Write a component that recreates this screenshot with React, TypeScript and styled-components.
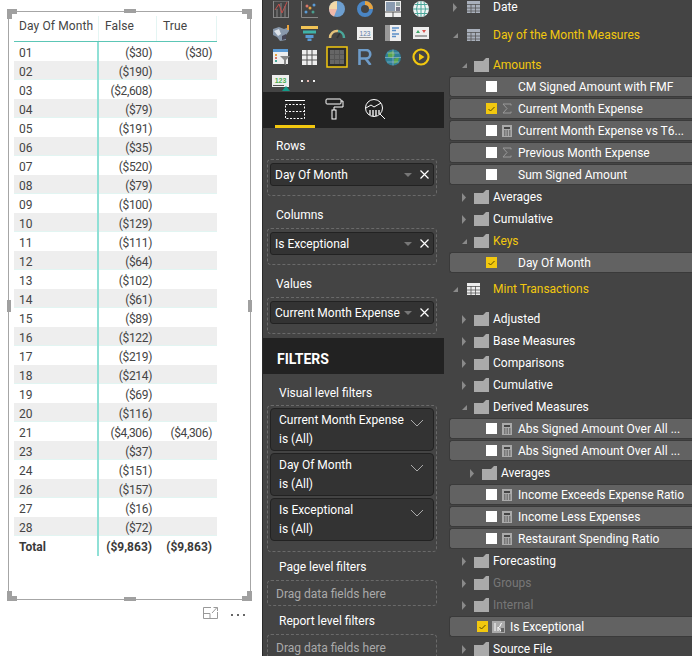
import React from "react";
import styled, { createGlobalStyle } from "styled-components";

const Global = createGlobalStyle`
  html, body { margin: 0; padding: 0; background: #fff; }
  body { width: 692px; height: 656px; overflow: hidden; font-family: Roboto, "Open Sans", Arial, sans-serif; font-size: 12px; }
  * { box-sizing: border-box; }
`;

const Page = styled.div`
  display: grid;
  grid-template-columns: 262px 182px 248px;
  width: 692px;
  height: 656px;
  overflow: hidden;
`;

/* ---------- report canvas ---------- */
const Canvas = styled.section`
  padding: 11px 11px 0 8px;
  background: #fff;
`;
const Frame = styled.div`
  position: relative;
  width: 243px;
  height: 589px;
  border: 1px solid #a6a6a6;
  padding: 4px 0 0 5px;
`;
const Corner = styled.span<{ $v: "top" | "bottom"; $h: "left" | "right" }>`
  position: absolute;
  width: 10px;
  height: 10px;
  ${(p) => p.$v}: ${(p) => (p.$v === "top" ? "-3px" : "-2px")};
  ${(p) => p.$h}: -2px;
  border-${(p) => p.$v}: 5px solid #a0a0a0;
  border-${(p) => p.$h}: 5px solid #a0a0a0;
`;
const HandleH = styled.span<{ $v: "top" | "bottom" }>`
  position: absolute;
  left: 115px;
  width: 12px;
  height: 4px;
  ${(p) => p.$v}: ${(p) => (p.$v === "top" ? "-3px" : "-2px")};
  background: #a0a0a0;
`;
const HandleV = styled.span<{ $h: "left" | "right" }>`
  position: absolute;
  top: 288px;
  width: 4px;
  height: 12px;
  ${(p) => p.$h}: -2px;
  background: #a0a0a0;
`;
const Matrix = styled.div`
  width: 203px;
  color: #444;
`;
const MatrixRow = styled.div<{ $band?: boolean }>`
  display: grid;
  grid-template-columns: 85px 58px 60px;
  height: 19px;
  line-height: 18px;
  background: ${(p) => (p.$band ? "#eeeeee" : "#fff")};
  box-shadow: inset 0 -1px 0 ${(p) => (p.$band ? "#e2f5f2" : "#fff")};
`;
const MatrixHead = styled.div`
  display: grid;
  grid-template-columns: 85px 58px 60px;
  height: 26px;
  line-height: 21px;
  border-bottom: 1px solid #5cc6b6;
  box-shadow: 0 1px 0 #5cc6b6;
`;
const HeadCell = styled.div`
  padding-left: 6px;
  border-right: 1px solid #e4f5f3;
  white-space: nowrap;
  letter-spacing: 0.12px;
  &:first-child { padding-left: 5px; }
`;
const KeyCell = styled.div`
  padding: 2px 0 0 5px;
  border-right: 2px solid #90e0d6;
`;
const NumCell = styled.div<{ $total?: boolean }>`
  padding: 2px 5px 0 0;
  text-align: right;
  letter-spacing: ${(p) => (p.$total ? "0" : "-0.35px")};
`;
const TotalRow = styled(MatrixRow)`
  font-weight: 700;
  background: #fff;
  box-shadow: none;
  color: #3a3a3a;
`;
const VisualActions = styled.div`
  display: flex;
  justify-content: flex-end;
  align-items: flex-start;
  gap: 13px;
  width: 237px;
  margin-top: 7px;
`;
const DotsWrap = styled.span`
  display: block;
  padding-top: 5px;
  line-height: 0;
`;

/* ---------- visualizations pane ---------- */
const Viz = styled.section`
  background: #444444;
  border-left: 1px solid #2a2a2a;
  color: #fff;
  overflow: hidden;
  height: 656px;
`;
const Gallery = styled.div`
  height: 95px;
`;
const IconGrid = styled.div`
  display: grid;
  grid-template-columns: repeat(6, 28px);
  grid-auto-rows: 24px;
  margin: -3px 0 0 4px;
`;
const IconCell = styled.div`
  display: flex;
  align-items: center;
  justify-content: center;
`;
const Tabs = styled.div`
  display: flex;
  height: 36px;
  padding-left: 12px;
  background: #222222;
`;
const Tab = styled.div<{ $active?: boolean }>`
  display: flex;
  align-items: center;
  justify-content: center;
  width: 40px;
  height: 36px;
  border-bottom: 3px solid ${(p) => (p.$active ? "#f2c80f" : "transparent")};
`;
const Sections = styled.div<{ $first?: boolean }>`
  padding: ${(p) => (p.$first ? "9px" : "0")} 6px 0 4px;
`;
const Label = styled.div<{ $indent?: boolean; $top?: number; $nudge?: boolean }>`
  height: 18px;
  line-height: ${(p) => (p.$nudge ? "20px" : "18px")};
  margin-top: ${(p) => p.$top ?? 10}px;
  margin-bottom: 4px;
  padding-left: ${(p) => (p.$indent ? "12px" : "9px")};
  white-space: nowrap;
`;
const Well = styled.div<{ $tight?: boolean }>`
  display: flex;
  flex-direction: column;
  gap: 2px;
  width: 170px;
  padding: ${(p) => (p.$tight ? "2px 2px 10px" : "3px 2px 9px")};
  border: 1px dashed #6a6a6a;
  border-radius: 4px;
`;
const Pill = styled.div`
  display: flex;
  align-items: center;
  height: 23px;
  padding: 0 4px;
  background: #333333;
  border: 1px solid #222;
  border-radius: 3px;
  white-space: nowrap;
`;
const PillText = styled.span`
  flex: 1;
`;
const Caret = styled.span`
  width: 0;
  height: 0;
  margin-right: 8px;
  border-left: 4px solid transparent;
  border-right: 4px solid transparent;
  border-top: 4px solid #777;
`;
const FilterPill = styled.div`
  display: grid;
  grid-template-columns: 1fr 23px;
  height: 43px;
  padding: 2px 0 0 8px;
  background: #333333;
  border: 1px solid #222;
  border-radius: 4px;
  line-height: 19px;
  white-space: nowrap;
`;
const Chevron = styled.div`
  padding-top: 3px;
`;
const FiltersBar = styled.div`
  display: flex;
  align-items: center;
  height: 36px;
  margin: 4px 0 9px;
  padding: 5px 0 0 14px;
  background: #222222;
  font-size: 14px;
  font-weight: 700;
`;
const DropZone = styled.div`
  width: 170px;
  height: 26px;
  margin-bottom: 6px;
  padding-left: 8px;
  line-height: 26px;
  color: #aaaaaa;
  border: 1px dashed #6a6a6a;
  border-radius: 4px;
`;

/* ---------- fields pane ---------- */
const Fields = styled.section`
  background: #444444;
  color: #fff;
  overflow: hidden;
  height: 656px;
`;
const Tree = styled.div`
  margin-top: -7px;
`;
const TableRow = styled.div<{ $top?: number; $bottom?: number }>`
  display: flex;
  align-items: center;
  height: 28px;
  margin-top: ${(p) => p.$top ?? 0}px;
  margin-bottom: ${(p) => p.$bottom ?? 0}px;
  padding-left: 8px;
`;
const FolderRow = styled.div<{ $nested?: boolean }>`
  display: flex;
  align-items: center;
  height: 22px;
  padding-left: ${(p) => (p.$nested ? "25px" : "17px")};
`;
const ArrowSlot = styled.span<{ $table?: boolean }>`
  display: flex;
  width: ${(p) => (p.$table ? "15px" : "13px")};
  justify-content: flex-start;
`;
const TreeLabel = styled.span<{ $tone?: "on" | "dim" }>`
  white-space: nowrap;
  color: ${(p) => (p.$tone === "on" ? "#f2c80f" : p.$tone === "dim" ? "#777" : "#fff")};
`;
const FolderName = styled(TreeLabel)`
  margin-left: 4px;
`;
const TableName = styled(TreeLabel)`
  margin-left: 13px;
`;
const FieldRow = styled.div<{ $wide?: boolean }>`
  display: flex;
  align-items: center;
  height: 21px;
  margin: 0 0 1px 5px;
  padding-left: ${(p) => (p.$wide ? "27px" : "36px")};
  background: #626262;
  border: 1px solid #3a3a3a;
  border-right: 0;
  border-radius: 3px 0 0 3px;
  white-space: nowrap;
`;
const Check = styled.span<{ $on?: boolean }>`
  display: flex;
  align-items: center;
  justify-content: center;
  flex: none;
  width: 11px;
  height: 11px;
  background: ${(p) => (p.$on ? "#f2c80f" : "#fff")};
`;
const FieldIconSlot = styled.span<{ $wide?: boolean }>`
  display: flex;
  align-items: center;
  justify-content: center;
  flex: none;
  width: ${(p) => (p.$wide ? "13px" : "10px")};
  margin: ${(p) => (p.$wide ? "0 5px 0 4px" : "0 6px 0 5px")};
`;

/* ---------- drawings ---------- */
const Folder = () => (
  <svg width="15" height="14" viewBox="0 0 15 14"><path d="M0 3h9l3-3h3v14H0z" fill="#aaa" /></svg>
);
const Arrow = ({ open }: { open?: boolean }) =>
  open ? (
    <svg width="7" height="7" viewBox="0 0 7 7"><path d="M6 1v5H1z" fill="#8a8a8a" /></svg>
  ) : (
    <svg width="6" height="9" viewBox="0 0 6 9"><path d="M1 0l4 4.500-4 4.500z" fill="#8a8a8a" /></svg>
  );
const TableIcon = ({ white }: { white?: boolean }) => (
  <svg width="13" height="12" viewBox="0 0 13 12">
    <rect width="13" height="12" fill={white ? "#eee" : "#a9b0bb"} />
    <path d="M0 3.500h13M0 7h13M0 10h13M4 3v9M8.500 3v9" stroke="#555" strokeWidth=".8" />
  </svg>
);
const Sigma = () => (
  <svg width="10" height="11" viewBox="0 0 10 11"><path d="M9 2.500V1H1l4 4.500L1 10h8V8.500" fill="none" stroke="#999" /></svg>
);
const Calc = () => (
  <svg width="10" height="12" viewBox="0 0 10 12">
    <rect width="10" height="12" fill="#aaa" />
    <rect x="2" y="2" width="6" height="2" fill="#444" />
    <path d="M2 6h1.500M4.500 6H6M7 6h1.500M2 8h1.500M4.500 8H6M7 8h1.500M2 10h1.500M4.500 10H6M7 10h1.500" stroke="#444" />
  </svg>
);
const CheckMark = () => (
  <svg width="7" height="6" viewBox="0 0 7 6"><path d="M.5 3l2 2 4-4" fill="none" stroke="#5a4a00" /></svg>
);
const GroupIcon = () => (
  <svg width="13" height="12" viewBox="0 0 13 12">
    <rect width="13" height="12" fill="#aaa" />
    <path d="M3 2v8M6 6v4M6 6l3 4M9.500 2l-2 4" stroke="#fff" fill="none" />
    <path d="M9 7h3v4H9z" fill="#666" />
  </svg>
);
const Close = () => (
  <svg width="9" height="9" viewBox="0 0 9 9"><path d="M.5.5l8 8M8.500.5l-8 8" stroke="#fff" strokeWidth="1.200" /></svg>
);
const ChevronIcon = () => (
  <svg width="14" height="8" viewBox="0 0 14 8"><path d="M1 1l6 6 6-6" fill="none" stroke="#aaa" /></svg>
);

const visuals: React.ReactNode[] = [
  <svg width="16" height="17" viewBox="0 0 16 17"><rect x=".5" y="0" width="15" height="16.500" fill="none" stroke="#888" /><path d="M3 16V8h2v8zM7 16V2h2v14zM11 16V5h2v11z" fill="#666" /><path d="M2 9l4-6 3 9 5-11" fill="none" stroke="#c0504d" /></svg>,
  <svg width="17" height="17" viewBox="0 0 17 17"><path d="M.5 0v16.500H17" fill="none" stroke="#888" /><circle cx="5" cy="11" r="1.500" fill="#5b9bd5" /><circle cx="9" cy="7" r="1.500" fill="#e8a33d" /><circle cx="12" cy="11" r="1.500" fill="#4a9e8e" /><circle cx="6" cy="5" r="1.500" fill="#d9776a" /><circle cx="13" cy="4" r="1.500" fill="#5b9bd5" /></svg>,
  <svg width="16" height="17" viewBox="0 0 16 17"><circle cx="8" cy="8" r="8" fill="#6d9fd0" /><path d="M8 8L0 8a8 8 0 0 0 5 7.400z" fill="#f0b8a8" /><path d="M8 8V0a8 8 0 0 0-8 8z" fill="#f3d9a8" /></svg>,
  <svg width="16" height="17" viewBox="0 0 16 17"><circle cx="8" cy="8" r="6" fill="none" stroke="#4a86c5" strokeWidth="4" /><path d="M8 2a6 6 0 0 1 6 6" fill="none" stroke="#e8a33d" strokeWidth="4" /></svg>,
  <svg width="16" height="16" viewBox="0 0 16 16"><rect width="16" height="16" fill="#eee" /><rect x="1" y="1" width="9" height="9" fill="#8a9bb0" /><rect x="11" y="1" width="4" height="4" fill="#9aa" /><rect x="11" y="6" width="4" height="4" fill="#778" /><path d="M0 11h16M8 11v5" stroke="#555" /></svg>,
  <svg width="16" height="16" viewBox="0 0 16 16"><circle cx="8" cy="8" r="8" fill="#f0f5f5" /><path d="M0 8h16M8 0v16M2 3.500h12M2 12.500h12M5 1q-3 7 0 14M11 1q3 7 0 14" fill="none" stroke="#4aa79a" /></svg>,
  <svg width="17" height="16" viewBox="0 0 17 16"><path d="M0 4l6-2 5 2 5-2v4l-3 4v5l-6 1-3-4-4-2z" fill="#8898ac" /><path d="M1 6l5-2 2 5-3 2z" fill="#dfe4ea" /><path d="M14 0h2v5h-2z" fill="#e8a33d" /><path d="M9 11l4-2v5l-4 1z" fill="#445" /></svg>,
  <svg width="17" height="15" viewBox="0 0 17 15"><path d="M0 0h17v3H0z" fill="#f2c456" /><path d="M2 4.500h13v3H2z" fill="#3fb3a8" /><path d="M4.500 9h8v3h-8z" fill="#5b9bd5" /><path d="M6.500 12.500h4V15h-4z" fill="#5b9bd5" /></svg>,
  <svg width="18" height="14" viewBox="0 0 18 14"><path d="M2 12a7 7 0 0 1 8-7" fill="none" stroke="#e3c27a" strokeWidth="2.500" /><path d="M10 5a7 7 0 0 1 6 7" fill="none" stroke="#4aa79a" strokeWidth="2.500" /><path d="M9 12l3-5" stroke="#333" strokeWidth="1.500" /></svg>,
  <svg width="16" height="13" viewBox="0 0 16 13"><rect width="16" height="13" fill="#eee" /><text x="8" y="8.500" fontSize="6.500" fontFamily="Liberation Sans" textAnchor="middle" fill="#5b7ca8">123</text><path d="M2 10.500h12" stroke="#999" /></svg>,
  <svg width="16" height="16" viewBox="0 0 16 16"><rect width="16" height="16" fill="#eee" /><rect x="0" width="5" height="16" fill="#999" /><path d="M7 3h7M7 5.500h4" stroke="#5b8fc7" strokeWidth="1.500" /><path d="M7 9h7M7 11.500h4" stroke="#5b8fc7" strokeWidth="1.500" /></svg>,
  <svg width="16" height="12" viewBox="0 0 16 12"><rect width="16" height="12" fill="#eee" /><path d="M3 6l2-3 2 3z" fill="#3fa66a" /><path d="M9 3h4l-2 3z" fill="#d9534f" /><path d="M2 9h12" stroke="#888" strokeWidth="1.500" /></svg>,
  <svg width="17" height="16" viewBox="0 0 17 16"><rect width="15" height="15" fill="#eee" /><rect width="15" height="3" fill="#5b9bd5" /><path d="M2 5h2v2H2z" fill="#e8a33d" /><path d="M2 8h2v2H2z" fill="#d9776a" /><path d="M2 11h2v2H2z" fill="#4aa79a" /><path d="M7 7h10l-4 4v5l-2-1v-4z" fill="#888" /></svg>,
  <svg width="15" height="15" viewBox="0 0 15 15"><rect width="15" height="15" fill="#eee" /><path d="M5 0v15M10 0v15M0 5h15M0 10h15" stroke="#555" /></svg>,
  <svg width="22" height="22" viewBox="0 0 22 22"><rect x="1" y="1" width="20" height="20" fill="#2e2e2e" stroke="#f2c80f" strokeWidth="1.500" /><rect x="4" y="4" width="14" height="14" fill="#666" /><path d="M8.500 4v14M13.500 4v14M4 8.500h14M4 13.500h14" stroke="#555" /></svg>,
  <svg width="14" height="16" viewBox="0 0 14 16"><path d="M1.500 16V1H8a4 4 0 0 1 0 8.500H1.500M7.500 9.500l5 6.500" fill="none" stroke="#6e9cc9" strokeWidth="2.600" /></svg>,
  <svg width="16" height="17" viewBox="0 0 16 17"><circle cx="8" cy="8.500" r="8" fill="#2f7f96" /><path d="M3 4l5-2 2 4-3 3-4-1zM9 10l5-2-1 5-4 2z" fill="#5aa64f" /><path d="M0 8.500h16M8 .5v16M2 4h12M2 13h12" stroke="#bcd" strokeWidth=".5" fill="none" /></svg>,
  <svg width="18" height="18" viewBox="0 0 18 18"><circle cx="9" cy="9" r="7.500" fill="none" stroke="#f2c80f" strokeWidth="2.200" /><path d="M7 5.500l5.500 3.500L7 12.500z" fill="#f2c80f" /></svg>,
  <svg width="18" height="20" viewBox="0 -4 18 20"><rect width="17" height="12" fill="#eee" /><text x="8.500" y="8" fontSize="7" fontWeight="700" fontFamily="Liberation Sans" textAnchor="middle" fill="#4caf50">123</text><path d="M1 10.500h11" stroke="#555" /><path d="M14 11l4 5h-8z" fill="#119c8a" /></svg>,
  <svg width="16" height="4" viewBox="0 0 16 4"><rect x="0" y="1" width="2" height="2" fill="#eee" /><rect x="6" y="1" width="2" height="2" fill="#e7b8b0" /><rect x="12" y="1" width="2" height="2" fill="#eee" /></svg>,
];

const matrixRows: [string, string, string?][] = [
  ["01", "($30)", "($30)"], ["02", "($190)"], ["03", "($2,608)"], ["04", "($79)"], ["05", "($191)"],
  ["06", "($35)"], ["07", "($520)"], ["08", "($79)"], ["09", "($100)"], ["10", "($129)"], ["11", "($111)"],
  ["12", "($64)"], ["13", "($102)"], ["14", "($61)"], ["15", "($89)"], ["16", "($122)"], ["17", "($219)"],
  ["18", "($214)"], ["19", "($69)"], ["20", "($116)"], ["21", "($4,306)", "($4,306)"], ["23", "($37)"],
  ["24", "($151)"], ["26", "($157)"], ["27", "($16)"], ["28", "($72)"],
];

type Node =
  | { t: "table"; name: string; open?: boolean; on?: boolean; white?: boolean; top?: number; bottom?: number }
  | { t: "folder"; name: string; open?: boolean; tone?: "on" | "dim"; nested?: boolean }
  | { t: "field"; name: string; on?: boolean; icon?: "sigma" | "calc" };

const tree: Node[] = [
  { t: "table", name: "Date" },
  { t: "table", name: "Day of the Month Measures", open: true, on: true, bottom: 5 },
  { t: "folder", name: "Amounts", open: true, tone: "on" },
  { t: "field", name: "CM Signed Amount with FMF" },
  { t: "field", name: "Current Month Expense", on: true, icon: "sigma" },
  { t: "field", name: "Current Month Expense vs T6...", icon: "calc" },
  { t: "field", name: "Previous Month Expense", icon: "sigma" },
  { t: "field", name: "Sum Signed Amount" },
  { t: "folder", name: "Averages" },
  { t: "folder", name: "Cumulative" },
  { t: "folder", name: "Keys", open: true, tone: "on" },
  { t: "field", name: "Day Of Month", on: true },
  { t: "table", name: "Mint Transactions", open: true, on: true, white: true, top: 2, bottom: 5 },
  { t: "folder", name: "Adjusted" },
  { t: "folder", name: "Base Measures" },
  { t: "folder", name: "Comparisons" },
  { t: "folder", name: "Cumulative" },
  { t: "folder", name: "Derived Measures", open: true },
  { t: "field", name: "Abs Signed Amount Over All ...", icon: "calc" },
  { t: "field", name: "Abs Signed Amount Over All ...", icon: "calc" },
  { t: "folder", name: "Averages", nested: true },
  { t: "field", name: "Income Exceeds Expense Ratio", icon: "calc" },
  { t: "field", name: "Income Less Expenses", icon: "calc" },
  { t: "field", name: "Restaurant Spending Ratio", icon: "calc" },
  { t: "folder", name: "Forecasting" },
  { t: "folder", name: "Groups", tone: "dim" },
  { t: "folder", name: "Internal", tone: "dim" },
];

const renderNode = (n: Node, i: number) => {
  if (n.t === "table")
    return (
      <TableRow key={i} $top={n.top} $bottom={n.bottom}>
        <ArrowSlot $table><Arrow open={n.open} /></ArrowSlot>
        <TableIcon white={n.white} />
        <TableName $tone={n.on ? "on" : undefined}>{n.name}</TableName>
      </TableRow>
    );
  if (n.t === "folder")
    return (
      <FolderRow key={i} $nested={n.nested}>
        <ArrowSlot><Arrow open={n.open} /></ArrowSlot>
        <Folder />
        <FolderName $tone={n.tone}>{n.name}</FolderName>
      </FolderRow>
    );
  return (
    <FieldRow key={i}>
      <Check $on={n.on}>{n.on && <CheckMark />}</Check>
      <FieldIconSlot>{n.icon === "sigma" ? <Sigma /> : n.icon === "calc" ? <Calc /> : null}</FieldIconSlot>
      {n.name}
    </FieldRow>
  );
};

export default function App() {
  return (
    <Page>
      <Global />
      <Canvas>
        <Frame>
          <Corner $v="top" $h="left" />
          <Corner $v="top" $h="right" />
          <Corner $v="bottom" $h="left" />
          <Corner $v="bottom" $h="right" />
          <HandleH $v="top" />
          <HandleH $v="bottom" />
          <HandleV $h="left" />
          <HandleV $h="right" />
          <Matrix>
            <MatrixHead>
              <HeadCell>Day Of Month</HeadCell>
              <HeadCell>False</HeadCell>
              <HeadCell>True</HeadCell>
            </MatrixHead>
            {matrixRows.map(([d, f, t], i) => (
              <MatrixRow key={d} $band={i % 2 === 1}>
                <KeyCell>{d}</KeyCell>
                <NumCell>{f}</NumCell>
                <NumCell>{t}</NumCell>
              </MatrixRow>
            ))}
            <TotalRow>
              <KeyCell>Total</KeyCell>
              <NumCell $total>($9,863)</NumCell>
              <NumCell $total>($9,863)</NumCell>
            </TotalRow>
          </Matrix>
        </Frame>
        <VisualActions>
          <svg width="15" height="12" viewBox="0 0 15 12"><path d="M8 .5H.5v11h14V5M.5 6.500H7v5M9 6l5-5.500M10.500.5H14.500V4" fill="none" stroke="#999" /></svg>
          <DotsWrap>
            <svg width="14" height="2" viewBox="0 0 14 2"><path d="M0 0h2v2H0zM6 0h2v2H6zM12 0h2v2h-2z" fill="#666" /></svg>
          </DotsWrap>
        </VisualActions>
      </Canvas>

      <Viz>
        <Gallery>
          <IconGrid>
            {visuals.map((v, i) => (
              <IconCell key={i}>{v}</IconCell>
            ))}
          </IconGrid>
        </Gallery>
        <Tabs>
          <Tab $active>
            <svg width="20" height="20" viewBox="0 0 20 20"><path d="M0 1.500h20" stroke="#fff" /><path d="M.5 5.500h19v14H.5zM.5 12.500h19" fill="none" stroke="#fff" strokeDasharray="2 1.500" /></svg>
          </Tab>
          <Tab>
            <svg width="20" height="22" viewBox="0 0 20 22"><rect x="1" y="1" width="15" height="5" rx="1" fill="none" stroke="#fff" /><path d="M16 3h2v6H9v3" fill="none" stroke="#fff" /><rect x="7" y="12" width="4" height="9" fill="none" stroke="#fff" /></svg>
          </Tab>
          <Tab>
            <svg width="22" height="22" viewBox="0 0 22 22"><circle cx="10" cy="10" r="8.500" fill="none" stroke="#fff" /><path d="M2 10l5-3 3 2 7-4" fill="none" stroke="#fff" /><path d="M6 12v5M9 12v6M12 12v6M15 12v4" stroke="#fff" strokeWidth="1.300" /><path d="M16 16l5 5" stroke="#fff" /></svg>
          </Tab>
        </Tabs>
        <Sections $first>
          <Label $top={0}>Rows</Label>
          <Well>
            <Pill><PillText>Day Of Month</PillText><Caret /><Close /></Pill>
          </Well>
          <Label>Columns</Label>
          <Well>
            <Pill><PillText>Is Exceptional</PillText><Caret /><Close /></Pill>
          </Well>
          <Label>Values</Label>
          <Well>
            <Pill><PillText>Current Month Expense</PillText><Caret /><Close /></Pill>
          </Well>
        </Sections>
        <FiltersBar>FILTERS</FiltersBar>
        <Sections>
          <Label $indent $nudge $top={0}>Visual level filters</Label>
          <Well $tight>
            <FilterPill><div>Current Month Expense<br />is (All)</div><Chevron><ChevronIcon /></Chevron></FilterPill>
            <FilterPill><div>Day Of Month<br />is (All)</div><Chevron><ChevronIcon /></Chevron></FilterPill>
            <FilterPill><div>Is Exceptional<br />is (All)</div><Chevron><ChevronIcon /></Chevron></FilterPill>
          </Well>
          <Label $indent $top={6}>Page level filters</Label>
          <DropZone>Drag data fields here</DropZone>
          <Label $indent $top={0}>Report level filters</Label>
          <DropZone>Drag data fields here</DropZone>
        </Sections>
      </Viz>

      <Fields>
        <Tree>
          {tree.map(renderNode)}
          <FieldRow $wide>
            <Check $on><CheckMark /></Check>
            <FieldIconSlot $wide><GroupIcon /></FieldIconSlot>
            Is Exceptional
          </FieldRow>
          <FolderRow>
            <ArrowSlot><Arrow /></ArrowSlot>
            <Folder />
            <FolderName>Source File</FolderName>
          </FolderRow>
        </Tree>
      </Fields>
    </Page>
  );
}
